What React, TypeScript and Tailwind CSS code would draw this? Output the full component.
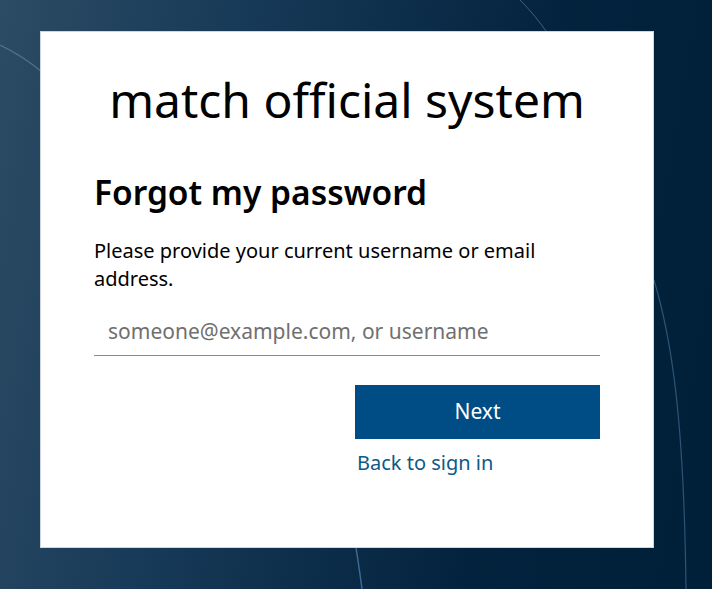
export default function App() {
  return (
    <div className="relative h-[589px] w-[712px] overflow-hidden bg-[linear-gradient(100deg,#2c4b64_0%,#173a58_30%,#03223d_70%,#002039_100%)] font-['Noto_Sans',sans-serif]">
      <svg className="absolute inset-0" width="712" height="589" viewBox="0 0 712 589" fill="none">
        <path d="M0 45 C 15 52, 30 62, 42 72" stroke="#4f7393" strokeWidth="1.2" />
        <path d="M520 0 C 530 10, 540 22, 548 34" stroke="#3d6183" strokeWidth="1" />
        <path d="M654 280 C 672 340, 684 420, 686 589" stroke="#2c5476" strokeWidth="1.2" />
        <path d="M356 548 C 358 560, 360 574, 362 589" stroke="#3f6a8e" strokeWidth="1.5" />
      </svg>
      <div className="relative pt-[31px] pl-[40px]">
        <div className="flex h-[517px] w-[614px] flex-col border border-[#cfd6dc] bg-white px-[53px]">
          <div className="mt-[38px] text-center text-[48px] leading-[60px] font-normal text-black">
            match official system
          </div>
          <h1 className="mt-[40px] text-[33.5px] leading-[44px] font-semibold text-black">Forgot my password</h1>
          <p className="mt-[23px] text-[20px] leading-[28px] text-black">
            Please provide your current username or email address.
          </p>
          <div className="mt-[24px] border-b border-[#8a8a8a] px-[14px] pb-[10px] text-[21px] leading-[28px] text-[#707070]">
            someone@example.com, or username
          </div>
          <div className="mt-[29px] flex flex-col items-end">
            <button className="h-[54px] w-[245px] bg-[#004c84] text-[21px] text-white">Next</button>
            <div className="mt-[10px] w-[245px] pl-[2px] text-[20px] leading-[28px] text-[#0b5a88]">Back to sign in</div>
          </div>
        </div>
      </div>
    </div>
  );
}
